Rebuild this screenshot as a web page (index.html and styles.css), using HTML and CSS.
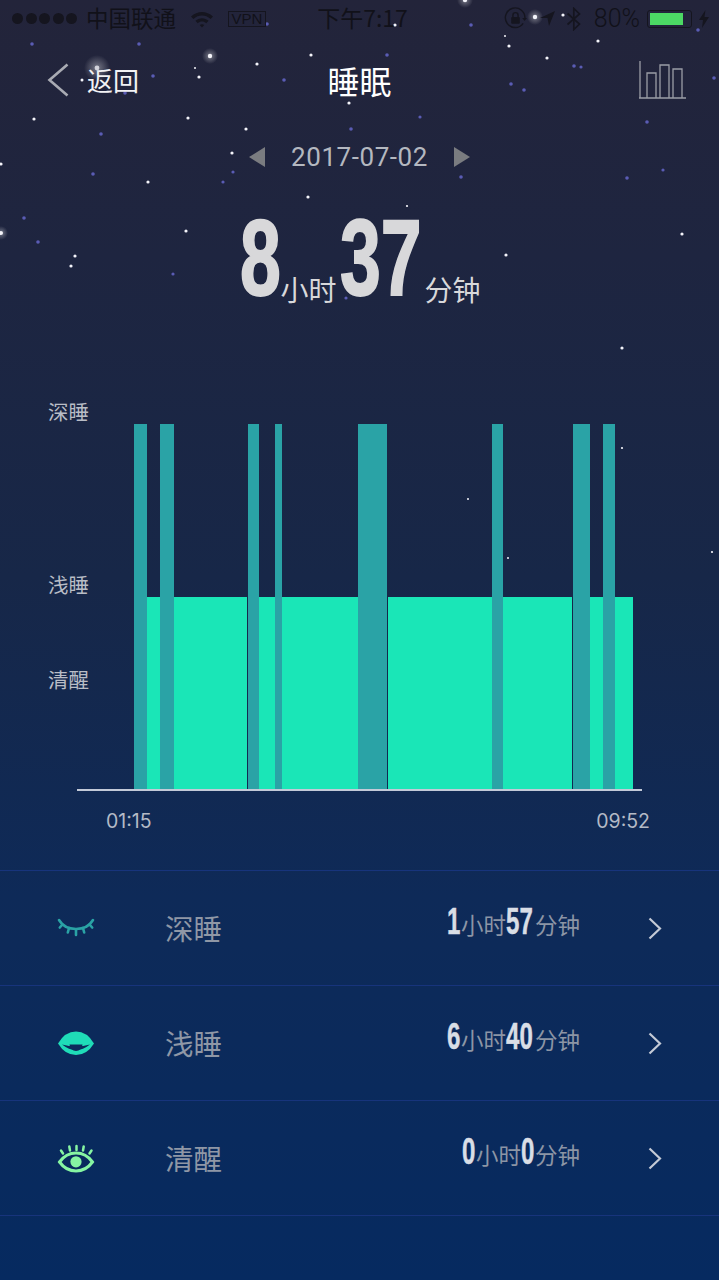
FILE: index.html
```html
<!DOCTYPE html>
<html lang="zh">
<head>
<meta charset="utf-8">
<title>睡眠</title>
<link rel="stylesheet" href="styles.css">
</head>
<body>
<main class="page">
  <svg class="stars" viewBox="0 0 719 1280" width="719" height="1280" aria-hidden="true">
    <defs>
      <radialGradient id="glow"><stop offset="0" stop-color="#fff" stop-opacity=".38"/><stop offset="1" stop-color="#fff" stop-opacity="0"/></radialGradient>
    </defs>
    <g fill="url(#glow)">
      <circle cx="97" cy="68" r="13"/><circle cx="210" cy="56" r="8"/><circle cx="535" cy="17" r="8"/><circle cx="465" cy="0" r="8"/><circle cx="1" cy="233" r="7"/>
    </g>
    <g fill="#5a5cb4">
      <circle cx="32" cy="44" r="1.8"/><circle cx="139" cy="44" r="1.8"/><circle cx="153" cy="76" r="1.8"/><circle cx="125" cy="93" r="1.8"/><circle cx="284" cy="80" r="1.8"/><circle cx="267" cy="24" r="1.8"/>
      <circle cx="471" cy="25" r="1.8"/><circle cx="387" cy="55" r="1.8"/><circle cx="511" cy="84" r="1.8"/><circle cx="524" cy="90" r="1.8"/><circle cx="574" cy="66" r="1.8"/><circle cx="581" cy="67" r="1.6"/><circle cx="698" cy="30" r="1.8"/><circle cx="714" cy="78" r="1.8"/>
      <circle cx="101" cy="134" r="1.8"/><circle cx="93" cy="174" r="1.8"/><circle cx="233" cy="172" r="1.6"/><circle cx="223" cy="182" r="1.6"/><circle cx="351" cy="129" r="1.8"/><circle cx="24" cy="218" r="1.8"/><circle cx="38" cy="242" r="1.8"/><circle cx="173" cy="274" r="1.6"/>
      <circle cx="420" cy="117" r="1.6"/><circle cx="647" cy="122" r="1.8"/><circle cx="461" cy="177" r="1.8"/><circle cx="627" cy="178" r="1.8"/><circle cx="663" cy="170" r="1.6"/><circle cx="346" cy="298" r="1.6"/>
    </g>
    <g fill="#f4f4fa">
      <circle cx="97" cy="68" r="2.4" fill-opacity=".75"/><circle cx="210" cy="56" r="2.2"/><circle cx="82" cy="80" r="1.5"/><circle cx="195" cy="68" r="1"/><circle cx="199" cy="77" r="1.6"/><circle cx="257" cy="64" r="1.6"/><circle cx="311" cy="55" r="1.6"/><circle cx="349" cy="103" r="1.6"/>
      <circle cx="395" cy="25" r="1.6"/><circle cx="535" cy="17" r="2.2"/><circle cx="563" cy="15" r="1.6"/><circle cx="505" cy="36" r="1"/><circle cx="509" cy="46" r="1.6"/><circle cx="547" cy="58" r="1.6"/><circle cx="598" cy="41" r="1.6"/><circle cx="465" cy="0" r="2.2"/>
      <circle cx="34" cy="119" r="1.6"/><circle cx="188" cy="118" r="1.6"/><circle cx="246" cy="129" r="1.6"/><circle cx="232" cy="153" r="1.6"/><circle cx="148" cy="182" r="1.6"/><circle cx="308" cy="197" r="1.6"/><circle cx="1" cy="164" r="1.6"/><circle cx="186" cy="231" r="1.6"/><circle cx="75" cy="256" r="1.6"/><circle cx="71" cy="266" r="1.6"/><circle cx="1" cy="233" r="2"/>
      <circle cx="407" cy="206" r="1.1"/><circle cx="682" cy="234" r="1.6"/><circle cx="506" cy="255" r="1.6"/><circle cx="622" cy="348" r="1.6"/><circle cx="622" cy="448" r="1.1"/><circle cx="468" cy="499" r="1"/><circle cx="508" cy="558" r="1"/><circle cx="712" cy="552" r="1.1"/>
    </g>
  </svg>

  <div class="status">
    <div class="status-left">
      <span class="signal"><i></i><i></i><i></i><i></i><i></i></span>
      <span class="carrier">中国联通</span>
      <svg class="wifi" viewBox="0 0 24 18" width="24" height="18"><path d="M1 6.500C7.500 .5 16.500 .5 23 6.500L20.600 9C15.400 4.400 8.600 4.400 3.400 9Z"/><path d="M5.400 10.800C9.400 7.400 14.600 7.400 18.600 10.800L16.300 13.200C13.600 11 10.400 11 7.700 13.200Z"/><path d="M9.700 15C11 14 13 14 14.300 15L12 17.500Z"/></svg>
      <span class="vpn">VPN</span>
    </div>
    <div class="clock">下午7:17</div>
    <div class="status-right">
      <svg class="lock" viewBox="0 0 24 24" width="23" height="23"><path d="M20 17A10.200 10.200 0 1 1 21.800 12" fill="none" stroke="#15151f" stroke-width="1.500"/><path d="M19 11.500h5l-2.500 3z"/><rect x="7.500" y="10.500" width="9" height="7" rx="1"/><path d="M9.300 10.500V8.600a2.700 2.700 0 0 1 5.400 0v1.900" fill="none" stroke="#15151f" stroke-width="1.500"/></svg>
      <svg class="arrow" viewBox="0 0 15 15" width="15" height="15"><path d="M15 0 0 7h7.500L9 15Z"/></svg>
      <svg class="bt" viewBox="0 0 16 24" width="16" height="24"><path d="M1.500 6.500 13.500 17 7.800 22.500V1.500L13.500 7 1.500 17.500" fill="none" stroke="#15151f" stroke-width="1.700"/></svg>
      <span class="pct">80%</span>
      <span class="battery"><span class="battery-fill"></span></span>
      <svg class="bolt" viewBox="0 0 10 18" width="10" height="18"><path d="M6.500 0 0 10h4l-1 8 7-11H5.500Z"/></svg>
    </div>
  </div>

  <header class="nav">
    <div class="back">
      <svg class="back-icon" viewBox="0 0 22 34" width="22" height="34"><path d="M20.500 1.500 2.500 17l18 15.500" fill="none" stroke="#a9abb3" stroke-width="2.600"/></svg>
      <span class="back-text">返回</span>
    </div>
    <h1 class="title">睡眠</h1>
    <svg class="bars-icon" viewBox="0 0 47 38" width="47" height="38"><path d="M1 0V36.500M0 37H47M8 36.500V12h9v24.500M21 36.500V4h9v32.500M34 36.500V8h9v28.500" fill="none" stroke="#9b9da6" stroke-width="1.300"/></svg>
  </header>

  <div class="date">
    <span class="tri tri-left"></span>
    <span class="date-text">2017-07-02</span>
    <span class="tri tri-right"></span>
  </div>

  <section class="hero">
    <span class="big big-1">8</span><span class="unit unit-h">小时</span><span class="big big-2">37</span><span class="unit unit-m">分钟</span>
  </section>

  <section class="chart">
    <div class="chart-top">
      <div class="ylabels">
        <span class="ylabel">深睡</span>
        <span class="ylabel ylabel-light">浅睡</span>
        <span class="ylabel ylabel-awake">清醒</span>
      </div>
      <div class="plot">
        <i class="seg deep" style="width:13px"></i><i class="seg light" style="width:13px"></i><i class="seg deep" style="width:14px"></i><i class="seg light" style="width:73px"></i><i class="seg deep cut" style="width:11px"></i><i class="seg light" style="width:16px"></i><i class="seg deep" style="width:7px"></i><i class="seg light" style="width:76px"></i><i class="seg deep" style="width:29px"></i><i class="seg light cut" style="width:104px"></i><i class="seg deep" style="width:11px"></i><i class="seg light" style="width:69px"></i><i class="seg deep cut" style="width:17px"></i><i class="seg light" style="width:13px"></i><i class="seg deep" style="width:12px"></i><i class="seg light" style="width:18px"></i>
      </div>
    </div>
    <div class="axis"></div>
    <div class="times"><span>01:15</span><span>09:52</span></div>
  </section>

  <section class="list">
    <div class="row">
      <svg class="eye" viewBox="0 0 38 30" width="38" height="30"><g fill="none" stroke="#2aa3a5" stroke-width="2.600" stroke-linecap="round"><path d="M2 7C9 19 29 19 36 7"/><path d="M5.500 11.500 2.800 14.500M12 15 10.800 19.500M19 16.500V22M26 15 27.200 19.500M32.500 11.500 35.200 14.500"/></g></svg>
      <span class="row-label">深睡</span>
      <span class="value"><b class="num num-1">1</b><span class="vu">小时</span><b class="num num-2">57</b><span class="vu">分钟</span></span>
      <svg class="chev" viewBox="0 0 14 23" width="14" height="23"><path d="M1.500 1.500 12 11.500 1.500 21.500" fill="none" stroke="#c4cad6" stroke-width="2.200"/></svg>
    </div>
    <div class="row">
      <svg class="eye" viewBox="0 0 38 30" width="38" height="30"><path fill="#1fdcb8" d="M1 15.500Q8 3.500 19 3.500T37 15.500Q30 27 19 27T1 15.500Z"/><path fill="#0d2a5c" d="M5 16.500Q19 27.500 33 16.500Q19 20.500 5 16.500Z"/><path fill="#0d2a5c" d="M12.500 16.500A6.500 6.500 0 0 0 25.500 16.500Z"/></svg>
      <span class="row-label">浅睡</span>
      <span class="value"><b class="num num-1">6</b><span class="vu">小时</span><b class="num num-2">40</b><span class="vu">分钟</span></span>
      <svg class="chev" viewBox="0 0 14 23" width="14" height="23"><path d="M1.500 1.500 12 11.500 1.500 21.500" fill="none" stroke="#c4cad6" stroke-width="2.200"/></svg>
    </div>
    <div class="row">
      <svg class="eye" viewBox="0 0 38 30" width="38" height="30"><g fill="none" stroke="#86f5a2" stroke-linecap="round"><path stroke-width="3" d="M2.500 19Q9 10 19 10T35.500 19Q29 28 19 28T2.500 19Z"/><path stroke-width="2.500" d="M6 10.500 4 7.500M13 7.500 12.300 3.500M19.500 7V3M26 7.500 26.700 3.500M32.500 10.500 34.500 7.500"/></g><circle cx="19" cy="18.800" r="5.600" fill="#86f5a2"/></svg>
      <span class="row-label">清醒</span>
      <span class="value"><b class="num num-1">0</b><span class="vu">小时</span><b class="num num-1">0</b><span class="vu">分钟</span></span>
      <svg class="chev" viewBox="0 0 14 23" width="14" height="23"><path d="M1.500 1.500 12 11.500 1.500 21.500" fill="none" stroke="#c4cad6" stroke-width="2.200"/></svg>
    </div>
  </section>
</main>
</body>
</html>
```
FILE: styles.css
```css
* { box-sizing: border-box; }
html, body { margin: 0; padding: 0; }
body { background: #062a60; font-family: "Noto Sans CJK SC", "Noto Sans", sans-serif; }
.page {
  position: relative;
  width: 719px;
  height: 1280px;
  overflow: hidden;
  background: linear-gradient(180deg, #23243a 0%, #1e2540 20%, #172748 45%, #0e2a58 70%, #062a60 100%);
}
.stars { position: absolute; left: 0; top: 0; }
.status, .nav, .date, .hero, .chart, .list { position: relative; }

.status {
  display: grid;
  grid-template-columns: 1fr auto 1fr;
  align-items: center;
  height: 40px;
  padding-bottom: 3px;
  color: #111119;
  font-size: 22.500px;
  line-height: 36px;
}
.status svg { fill: #15151f; flex: none; }
.status-left { display: flex; align-items: center; padding-left: 12px; }
.signal { display: flex; gap: 2.500px; }
.signal i { width: 11px; height: 11px; border-radius: 50%; background: #15151f; }
.carrier { margin: -3px 0 0 9px; }
.wifi { margin-left: 14px; }
.vpn {
  margin-left: 14px;
  width: 38px;
  height: 16px;
  border: 1px solid #15151f;
  font: 15px/14px "Liberation Sans", sans-serif;
  text-align: center;
}
.clock { font-size: 23px; margin: -3px 0 0 6px; }
.status-right { display: flex; align-items: center; justify-content: flex-end; padding-right: 10px; }
.arrow { margin-left: 13px; }
.bt { margin-left: 11px; }
.pct { margin-left: 12px; font: 300 25px/36px Roboto, sans-serif; }
.battery {
  display: block;
  width: 45px;
  height: 18px;
  margin-left: 7px;
  padding: 2px;
  border: 1px solid #15151f;
  border-radius: 3px;
}
.battery-fill { display: block; width: 33px; height: 100%; background: #4cd964; }
.bolt { margin-left: 7px; }

.nav {
  display: flex;
  align-items: center;
  justify-content: space-between;
  height: 84px;
  margin-top: -2px;
  padding: 0 33px 0 47px;
}
.back { display: flex; align-items: center; gap: 18px; color: #f2f2f4; font-size: 26px; }
.back-text { margin-top: -2px; }
.title {
  position: absolute;
  left: 0;
  right: 0;
  margin: 0;
  text-align: center;
  color: #fff;
  font-size: 32px;
  font-weight: 400;
  line-height: 84px;
}

.date {
  display: flex;
  align-items: center;
  justify-content: center;
  height: 40px;
  margin-top: 15px;
  gap: 26px;
}
.date-text { color: #b4b8c0; font: 400 26px/40px Roboto, sans-serif; letter-spacing: .55px; }
.tri { width: 0; height: 0; border-top: 10px solid transparent; border-bottom: 10px solid transparent; }
.tri-left { border-right: 16px solid #7a7c80; }
.tri-right { border-left: 16px solid #7a7c80; }

.hero {
  display: flex;
  align-items: flex-end;
  justify-content: center;
  height: 223px;
  padding: 0 0 89px 2px;
  color: #d8d8da;
}
.big {
  display: block;
  margin-bottom: -11px;
  font: 700 108px/128px "Liberation Sans", sans-serif;
  -webkit-text-stroke: 2px #d8d8da;
  transform: scaleX(.68);
  transform-origin: left center;
  white-space: nowrap;
}
.big-1 { width: 40px; }
.big-2 { width: 84px; }
.unit { font-size: 28px; line-height: 36px; margin-bottom: 4px; }
.unit-h { width: 60px; }

.chart-top { display: flex; height: 389px; padding-left: 48px; }
.ylabels { display: flex; flex-direction: column; width: 86px; margin-top: -1px; }
.ylabel { color: #b9bdc6; font-size: 20.500px; line-height: 24px; }
.ylabel-light { margin-top: 149px; }
.ylabel-awake { margin-top: 71px; }
.plot { display: flex; align-items: flex-end; width: 500px; height: 389px; }
.seg { display: block; flex: none; }
.deep { height: 365px; background: #2aa3a6; }
.light { height: 192px; background: #1ae6b7; }
.cut { margin-left: 1px; }
.axis { width: 565px; height: 2px; margin-left: 77px; background: #c3cad8; }
.times {
  display: flex;
  justify-content: space-between;
  width: 544px;
  margin: 18px 0 0 106px;
  color: #b4bac6;
  font: 400 19.500px/24px Inter, sans-serif;
}

.list { margin-top: 37px; border-bottom: 1px solid #17347c; }
.row {
  display: flex;
  align-items: center;
  height: 115px;
  padding: 0 57px;
  border-top: 1px solid #17347c;
}
.eye { flex: none; }
.row-label { margin-left: 70px; color: #8f97a6; font-size: 28.500px; line-height: 40px; }
.value {
  display: flex;
  align-items: center;
  margin-left: auto;
  margin-top: -12px;
  color: #8c95a5;
}
.num {
  display: block;
  color: #d9dee6;
  font: 700 37px/44px "Liberation Sans", sans-serif;
  -webkit-text-stroke: .5px #d9dee6;
  transform: scaleX(.65);
  transform-origin: left center;
  white-space: nowrap;
}
.num-1 { width: 14px; }
.num-2 { width: 29px; }
.vu { font-size: 22.500px; line-height: 30px; margin-top: 4px; }
.chev { margin-left: 68px; flex: none; }
```
